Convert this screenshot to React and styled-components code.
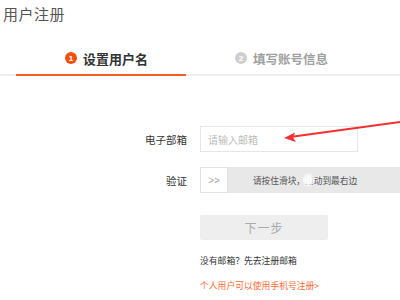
import React from "react";
import styled, { createGlobalStyle } from "styled-components";

const GlobalStyle = createGlobalStyle`
  html, body {
    margin: 0;
    padding: 0;
    background: #fff;
    overflow: hidden;
  }
  body {
    font-family: "Noto Sans CJK SC", "Noto Sans", "Liberation Sans", sans-serif;
  }
`;

const Page = styled.div`
  position: relative;
  width: 400px;
  height: 300px;
  overflow: hidden;
`;

const Title = styled.h1`
  margin: 0;
  padding: 4px 0 0 3px;
  font-size: 15px;
  line-height: 20px;
  font-weight: 400;
  color: #555;
  letter-spacing: 0.5px;
`;

const TabBar = styled.div`
  display: flex;
  margin-top: 22px;
  padding-left: 16px;
  border-bottom: 2px solid #eeeeee;
`;

const Tab = styled.div`
  box-sizing: border-box;
  width: 170px;
  height: 30px;
  margin-bottom: -2px;
  padding: 0 0 4px 49px;
  display: flex;
  align-items: center;
  gap: 6px;
  border-bottom: 2px solid ${(p) => (p.$active ? "#f75c22" : "transparent")};
`;

const StepNum = styled.span`
  width: 12px;
  height: 12px;
  border-radius: 50%;
  background: ${(p) => (p.$active ? "#f2500f" : "#cfcfcf")};
  color: #fff;
  font-size: 8px;
  font-weight: 700;
  display: flex;
  align-items: center;
  justify-content: center;
  font-family: "Liberation Sans", sans-serif;
`;

const StepText = styled.span`
  font-size: ${(p) => (p.$active ? "13px" : "12.5px")};
  font-weight: 700;
  color: ${(p) => (p.$active ? "#333" : "#a0a0a0")};
`;

const Form = styled.div`
  margin-top: 50px;
  display: flex;
  flex-direction: column;
  gap: 15px;
`;

const Row = styled.div`
  display: flex;
  align-items: center;
  height: 26px;
`;

const Label = styled.label`
  width: 187px;
  margin-right: 13px;
  text-align: right;
  font-size: 10.5px;
  color: #333;
  flex-shrink: 0;
`;

const Input = styled.input`
  box-sizing: border-box;
  width: 158px;
  height: 26px;
  border: 1px solid #e6e6e6;
  padding: 0 0 0 7px;
  font-size: 10px;
  font-family: inherit;
  outline: none;
  &::placeholder {
    color: #bbb;
  }
`;

const Slider = styled.div`
  position: relative;
  display: flex;
  width: 210px;
  height: 26px;
  background: #e8e8e8;
  flex-shrink: 0;
`;

const Handle = styled.div`
  box-sizing: border-box;
  width: 28px;
  height: 26px;
  background: #fff;
  border: 1px solid #e3e3e3;
  display: flex;
  align-items: center;
  justify-content: center;
  color: #aaa;
  font-size: 10px;
  font-family: "Liberation Sans", sans-serif;
`;

const SlideText = styled.div`
  flex: 1;
  display: flex;
  align-items: center;
  justify-content: center;
  font-size: 8.7px;
  color: #555;
  margin-left: -28px;
`;

const Shine = styled.div`
  position: absolute;
  left: 102px;
  top: 6px;
  width: 13px;
  height: 14px;
  background: radial-gradient(ellipse at center, rgba(255, 255, 255, 0.95) 35%, rgba(255, 255, 255, 0) 75%);
`;

const Actions = styled.div`
  padding-left: 200px;
  margin-top: 21px;
`;

const NextButton = styled.button`
  width: 128px;
  height: 25px;
  border: none;
  border-radius: 2px;
  background: #eeeeee;
  color: #aaa;
  font-size: 12px;
  font-family: inherit;
  letter-spacing: 1px;
  padding: 0;
`;

const Note = styled.div`
  margin-top: ${(p) => p.$top}px;
  font-size: 8.8px;
  line-height: 14px;
  color: ${(p) => (p.$accent ? "#ff6a33" : "#333")};
`;

const Arrow = styled.svg`
  position: absolute;
  left: 280px;
  top: 115px;
`;

export default function App() {
  return (
    <Page>
      <GlobalStyle />
      <Title>用户注册</Title>
      <TabBar>
        <Tab $active>
          <StepNum $active>1</StepNum>
          <StepText $active>设置用户名</StepText>
        </Tab>
        <Tab>
          <StepNum>2</StepNum>
          <StepText>填写账号信息</StepText>
        </Tab>
      </TabBar>
      <Form>
        <Row>
          <Label>电子部箱</Label>
          <Input placeholder="请输入邮箱" />
        </Row>
        <Row>
          <Label>验证</Label>
          <Slider>
            <Handle>&gt;&gt;</Handle>
            <SlideText>请按住滑块，拖动到最右边</SlideText>
            <Shine />
          </Slider>
        </Row>
      </Form>
      <Actions>
        <NextButton>下一步</NextButton>
        <Note $top={14}>没有邮箱？先去注册邮箱</Note>
        <Note $top={11} $accent>个人用户可以使用手机号注册&gt;</Note>
      </Actions>
      <Arrow width="120" height="30" viewBox="0 0 120 30">
        <path d="M120 7 L10 22" stroke="#f23030" strokeWidth="2" strokeLinecap="round" />
        <path d="M4 23 L15 17.5 L13 22.5 L16 27 Z" fill="#f23030" />
      </Arrow>
    </Page>
  );
}
